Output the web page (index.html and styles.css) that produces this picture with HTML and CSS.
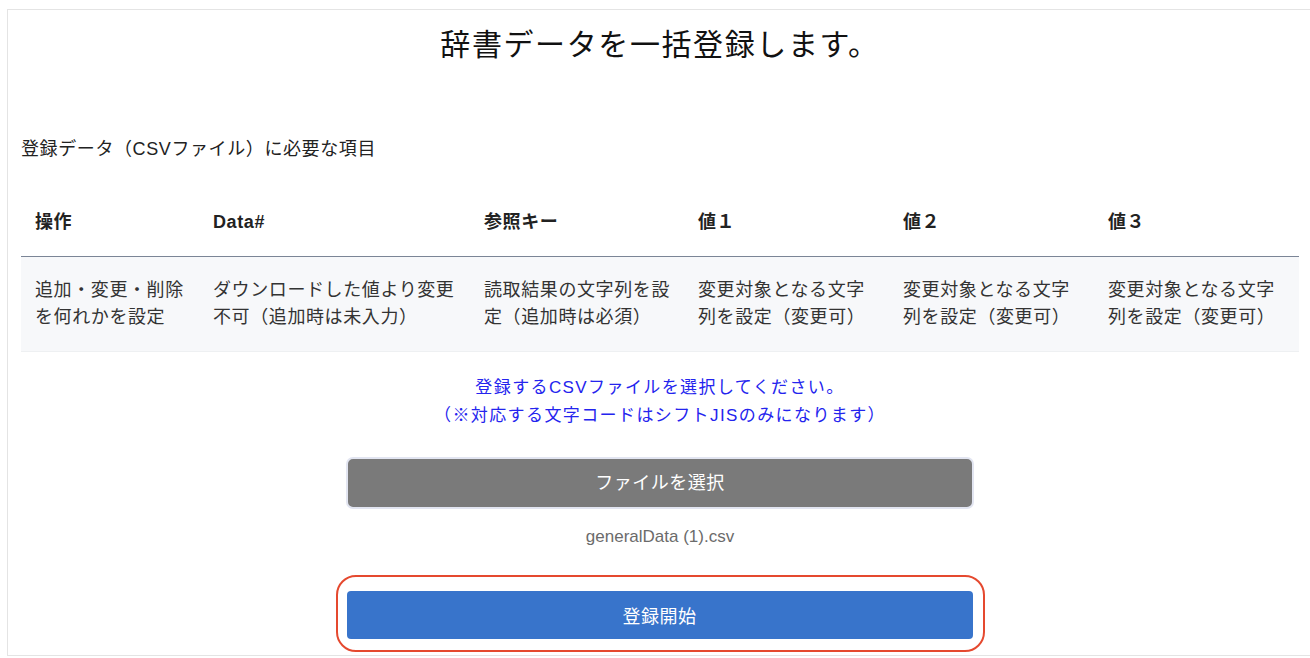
FILE: index.html
```html
<!DOCTYPE html>
<html lang="ja">
<head>
    <meta charset="UTF-8">
    <meta name="viewport" content="width=device-width, initial-scale=1.0">
    <title>辞書データ一括登録</title>
    <link rel="stylesheet" href="styles.css">
</head>
<body>
    <div class="card">
        <h1>辞書データを一括登録します。</h1>

        <!-- CSVの項目説明 -->
        <p class="lead">登録データ（CSVファイル）に必要な項目</p>
        <table class="item-table">
            <colgroup>
                <col class="c1"><col class="c2"><col class="c3">
                <col class="c4"><col class="c4"><col class="c4">
            </colgroup>
            <thead>
                <tr>
                    <th>操作</th>
                    <th>Data#</th>
                    <th>参照キー</th>
                    <th>値１</th>
                    <th>値２</th>
                    <th>値３</th>
                </tr>
            </thead>
            <tbody>
                <tr>
                    <td>追加・変更・削除<br>を何れかを設定</td>
                    <td>ダウンロードした値より変更<br>不可（追加時は未入力）</td>
                    <td>読取結果の文字列を設<br>定（追加時は必須）</td>
                    <td>変更対象となる文字<br>列を設定（変更可）</td>
                    <td>変更対象となる文字<br>列を設定（変更可）</td>
                    <td>変更対象となる文字<br>列を設定（変更可）</td>
                </tr>
            </tbody>
        </table>

        <!-- アップロード -->
        <p class="notice">登録するCSVファイルを選択してください。<br>（※対応する文字コードはシフトJISのみになります）</p>
        <label class="file-btn">
            ファイルを選択
            <input type="file" accept=".csv">
        </label>
        <p class="file-name">generalData (1).csv</p>
        <div class="highlight">
            <button class="submit-btn">登録開始</button>
        </div>
    </div>
</body>
</html>
```

FILE: styles.css
```css
html, body {
    overflow: hidden;
}
body {
    margin: 0;
    font-family: "Liberation Sans", "Noto Sans CJK JP", sans-serif;
    color: #222;
    background-color: #fff;
}
.card {
    margin: 9px 0 0 7px;
    width: 1278px;
    height: 645px;
    padding: 0 13px;
    border: 1px solid #e4e4e4;
}
h1 {
    margin: 17px 0 0;
    font-size: 30px;
    line-height: 36px;
    font-weight: normal;
    letter-spacing: 1.6px;
    text-align: center;
    color: #111;
}
.lead {
    margin: 73px 0 0 0;
    font-size: 18px;
    line-height: 27px;
    letter-spacing: 0.6px;
    color: #222;
}
.item-table {
    margin-top: 26px;
    width: 1278px;
    border-collapse: collapse;
    table-layout: fixed;
}
.c1 { width: 178px; }
.c2 { width: 271px; }
.c3 { width: 214px; }
.c4 { width: 205px; }
.item-table th, .item-table td {
    padding: 20px 0 20px 14px;
    text-align: left;
    font-size: 18px;
    line-height: 27px;
    letter-spacing: 0.6px;
    white-space: nowrap;
}
.item-table th {
    font-weight: bold;
    color: #222;
    border-bottom: 1px solid #7b8596;
}
.item-table td {
    color: #333;
    background-color: #f7f8fa;
    border-bottom: 1px solid #eef0f2;
}
.notice {
    margin: 22px 0 0;
    text-align: center;
    color: #2424ee;
    font-size: 17px;
    line-height: 28px;
    letter-spacing: 1.4px;
}
.file-btn {
    display: block;
    box-sizing: border-box;
    margin: 27px auto 0;
    width: 628px;
    height: 52px;
    line-height: 48px;
    background-color: #7a7a7a;
    border: 2px solid #e2e5f1;
    border-radius: 7px;
    color: #fff;
    font-size: 18px;
    letter-spacing: 0.5px;
    text-align: center;
    cursor: pointer;
}
.file-btn input {
    display: none;
}
.file-name {
    margin: 18px 0 0;
    text-align: center;
    font-size: 17px;
    line-height: 20px;
    color: #6b6b6b;
}
.highlight {
    margin: 28px auto 0;
    box-sizing: border-box;
    width: 649px;
    padding: 14px 10px 11px 9px;
    border: 2px solid #e5492f;
    border-radius: 20px;
}
.submit-btn {
    display: block;
    width: 626px;
    height: 48px;
    border: none;
    border-radius: 4px;
    background-color: #3874cb;
    color: #fff;
    font-family: inherit;
    font-size: 18px;
    letter-spacing: 0.5px;
    cursor: pointer;
}
```
